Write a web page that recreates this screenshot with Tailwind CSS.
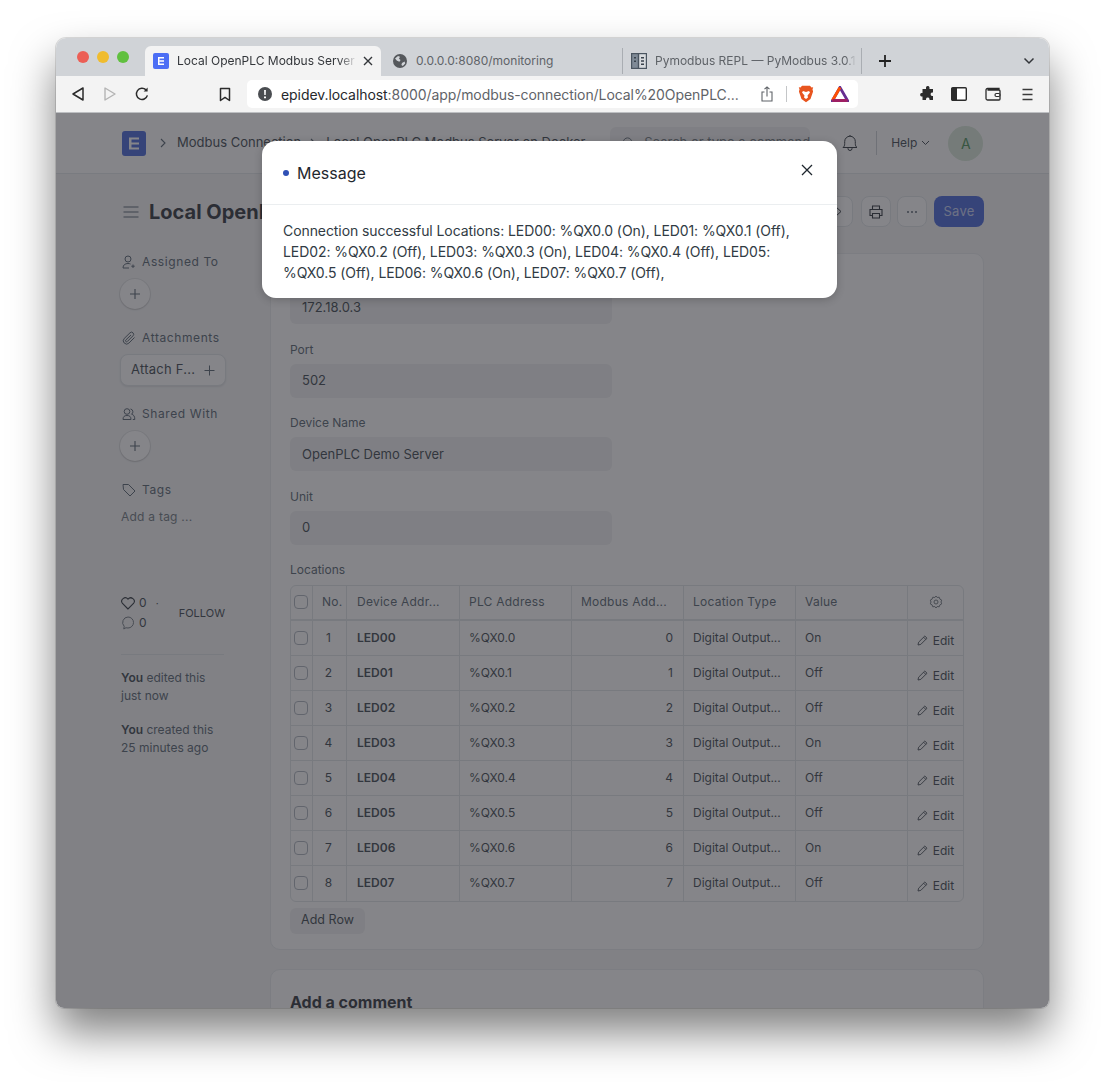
<!DOCTYPE html>
<html lang="en">
<head>
    <meta charset="UTF-8">
    <meta name="viewport" content="width=device-width, initial-scale=1.0">
    <title>Modbus Connection</title>
    <script src="https://cdn.jsdelivr.net/npm/@tailwindcss/browser@4"></script>
</head>
<body class="bg-white w-[1105px] h-[1082px] overflow-hidden font-['Inter',sans-serif] text-[#1f272e]">
<div class="relative ml-[56px] mt-[38px] w-[993px] h-[970px] rounded-t-[10px] rounded-b-[8px] overflow-hidden flex flex-col float-left">

    <!-- Tab strip -->
    <div class="h-[38px] shrink-0 bg-[#d0d3d7] flex items-end text-[12px] relative">
        <div class="w-[89px] h-[38px] pl-[21px] pt-[13px] flex gap-2">
            <span class="w-3 h-3 rounded-full bg-[#ec5f56]"></span>
            <span class="w-3 h-3 rounded-full bg-[#f0bc2e]"></span>
            <span class="w-3 h-3 rounded-full bg-[#60c03f]"></span>
        </div>
        <!-- active tab -->
        <div class="w-[236px] h-[30px] bg-[#f3f3f3] rounded-t-[6px] flex items-center pl-2 text-[#33363a]">
            <svg width="16" height="16" viewBox="0 0 16 16" class="shrink-0"><rect width="16" height="16" rx="2" fill="#4c6ef5"/><path d="M5 4h6v1.400H5zM6.600 7.300H11v1.400H6.600zM5 10.600h6V12H5zM5 4h1.500v8H5z" fill="#fff"/></svg>
            <span class="ml-2 w-[180px] whitespace-nowrap [mask-image:linear-gradient(to_right,black_90%,transparent_100%)]">Local OpenPLC Modbus Server</span>
            <svg width="10" height="10" viewBox="0 0 10 10" class="ml-[6px]"><path d="M1 1l8 8M9 1l-8 8" stroke="#33363a" stroke-width="1.400"/></svg>
        </div>
        <!-- monitoring tab -->
        <div class="w-[241px] h-[30px] flex items-center pl-[12px] text-[#5f6368]">
            <svg width="14" height="14" viewBox="0 0 14 14" class="shrink-0"><circle cx="7" cy="7" r="7" fill="#55585c"/><path d="M2 4.500l3-2.600 2 .8-1 2 1.600 1.400-1.200 1.600-2.400-1zM9 9l2.600-1.400.6 2-2.400 2.400-1.400-1z" fill="#d0d3d7"/></svg>
            <span class="ml-[9px] whitespace-nowrap">0.0.0.0:8080/monitoring</span>
        </div>
        <!-- pymodbus tab -->
        <div class="w-[240px] h-[26px] mb-[2px] flex items-center pl-2 border-x border-[#a9adb2] text-[#5f6368]">
            <svg width="16" height="16" viewBox="0 0 16 16" class="shrink-0"><rect width="16" height="16" fill="#4a5560"/><rect x="1.200" y="1.200" width="5.600" height="13.600" fill="#7f8a96"/><rect x="8.200" y="1.200" width="6.600" height="13.600" fill="#d8dbde"/><path d="M3 4h2v1.600H3zM3 7.500h2v1.600H3zM10 4h3v1.400h-3zM10 7.300h3v1.400h-3zM10 10.600h3V12h-3z" fill="#39424c"/></svg>
            <span class="ml-2 whitespace-nowrap [mask-image:linear-gradient(to_right,black_95%,transparent_100%)]">Pymodbus REPL — PyModbus 3.0.1</span>
        </div>
        <svg width="14" height="14" viewBox="0 0 14 14" class="ml-[16px] mb-[8px]"><path d="M7 1v12M1 7h12" stroke="#222" stroke-width="1.800"/></svg>
        <svg width="12" height="8" viewBox="0 0 12 8" class="ml-[131px] mb-[11px]"><path d="M1.500 1.500L6 6l4.500-4.500" fill="none" stroke="#33363a" stroke-width="1.500"/></svg>
    </div>

    <!-- Toolbar -->
    <div class="h-[37px] shrink-0 bg-[#f3f3f3] flex items-center border-b border-[#bdbfc2] relative">
        <svg width="14" height="16" viewBox="0 0 14 16" class="ml-[15px]"><path d="M12 2v12L2 8z" fill="none" stroke="#2b2b2b" stroke-width="1.500" stroke-linejoin="round"/></svg>
        <svg width="14" height="16" viewBox="0 0 14 16" class="ml-[18px]"><path d="M2 2v12l10-6z" fill="none" stroke="#b4b4b4" stroke-width="1.400" stroke-linejoin="round"/></svg>
        <svg width="16" height="16" viewBox="0 0 16 16" class="ml-[17px]"><path d="M13.400 9.400A5.600 5.600 0 1 1 12 3.900" fill="none" stroke="#2b2b2b" stroke-width="1.500"/><path d="M13.600 1.400v4h-4z" fill="#2b2b2b"/></svg>
        <svg width="12" height="15" viewBox="0 0 12 15" class="ml-[69px]"><path d="M1.500 1.500h9v12L6 10.400l-4.500 3.100z" fill="none" stroke="#2b2b2b" stroke-width="1.500" stroke-linejoin="round"/></svg>
        <!-- address bar -->
        <div class="ml-[16px] w-[611px] h-[28px] bg-white rounded-[5px] flex items-center pl-[11px] text-[14px] tracking-[-0.005em] text-[#5f6368]">
            <svg width="14" height="14" viewBox="0 0 14 14" class="shrink-0"><circle cx="7" cy="7" r="7" fill="#4a4d51"/><path d="M6.100 3h1.800l-.2 5H6.300z M6 9.400h2v1.800H6z" fill="#fff"/></svg>
            <span class="ml-[9px] w-[462px] whitespace-nowrap"><span class="text-[#26282b]">epidev.localhost</span>:8000/app/modbus-connection/Local%20OpenPLC...</span>
            <svg width="12" height="16" viewBox="0 0 12 16" class="ml-[18px]"><path d="M3.500 6H1v9h10V6H8.500M6 10.500V1M3.500 3.200L6 1l2.500 2.200" fill="none" stroke="#5f6368" stroke-width="1.100"/></svg>
            <span class="ml-[13px] w-px h-4 bg-[#c4c6c8]"></span>
            <svg width="16" height="18" viewBox="0 0 16 18" class="ml-[11px]"><path d="M4 .8h8l1.500 1.700 1.700-.3-.7 2.200.6 2.100-2.600 7.500L8 17.300 3.500 14 .9 6.500l.6-2.100-.7-2.200 1.700.3z" fill="#e8551f"/><path d="M5 6l3 1 3-1 1 1.500-2.500 3 .5 2-2 1.500-2-1.500.5-2L4 7.500z" fill="#fff"/></svg>
            <svg width="18" height="16" viewBox="0 0 18 16" class="ml-[17px]"><path d="M9 1.500L1.500 14.500h15z" fill="none" stroke="#662d91" stroke-width="2.800"/><path d="M9 1.500L1.500 14.500" stroke="#ff5000" stroke-width="2.800"/><path d="M1.500 14.500h15" stroke="#9e1f63" stroke-width="2.800"/></svg>
        </div>
        <svg width="16" height="16" viewBox="0 0 16 16" class="ml-[62px]"><path d="M6 1.500a1.800 1.800 0 0 1 3.500 0V3H13v3.500h-1a1.800 1.800 0 0 0 0 3.500h1V14H9.500v-1a1.800 1.800 0 0 0-3.500 0v1H2.500v-3.500H1.500a1.800 1.800 0 0 1 0-3.500h1V3H6z" fill="#2b2b2b"/></svg>
        <svg width="16" height="14" viewBox="0 0 16 14" class="ml-[15px]"><rect x=".7" y=".7" width="14.600" height="12.600" rx="1" fill="#fff" stroke="#2b2b2b" stroke-width="1.400"/><rect x="1" y="1" width="5" height="12" fill="#2b2b2b"/></svg>
        <svg width="16" height="14" viewBox="0 0 16 14" class="ml-[18px]"><path d="M14 3V1.500H2.500A1.500 1.500 0 0 0 1 3v8.500A1.500 1.500 0 0 0 2.500 13H14a1 1 0 0 0 1-1V4a1 1 0 0 0-1-1H2.500" fill="none" stroke="#2b2b2b" stroke-width="1.300"/><rect x="10" y="6.500" width="5" height="3" rx="1.500" fill="#fff" stroke="#2b2b2b" stroke-width="1.200"/></svg>
        <svg width="11" height="13" viewBox="0 0 11 13" class="ml-[21px]"><path d="M.5 1.500h10M.5 6.500h10M.5 11.500h10" stroke="#3a3a3a" stroke-width="1.400"/></svg>
    </div>

    <!-- Page under the dialog -->
    <div class="flex-1 bg-[#f4f5f6] overflow-hidden">
        <div class="h-[61px] bg-white border-b border-[#e2e6e9] flex items-center pl-[66px] text-[13px] text-[#313b44]">
            <svg width="24" height="25" viewBox="0 0 24 25" class="shrink-0"><rect width="24" height="25" rx="3" fill="#3a5cd8"/><path d="M7 6.500h10v2H7zM9.500 11.500H17v2H9.500zM7 16.500h10v2H7zM7 6.500h2.500v12H7z" fill="#fff"/></svg>
            <svg width="6" height="10" viewBox="0 0 6 10" class="ml-[14px]"><path d="M1 1l4 4-4 4" fill="none" stroke="#4c5a67" stroke-width="1.100"/></svg>
            <span class="ml-[11px] whitespace-nowrap">Modbus Connection</span>
            <svg width="6" height="10" viewBox="0 0 6 10" class="ml-[9px]"><path d="M1 1l4 4-4 4" fill="none" stroke="#4c5a67" stroke-width="1.100"/></svg>
            <span class="ml-[10px] w-[270px] whitespace-nowrap">Local OpenPLC Modbus Server on Docker</span>
            <div class="ml-[14px] w-[200px] h-[32px] -mt-px bg-[#f0f1f2] rounded-[6px] flex items-center pl-[12px] text-[#687178]">
                <svg width="14" height="14" viewBox="0 0 14 14"><circle cx="6" cy="6" r="4.500" fill="none" stroke="#4c5a67"/><path d="M9.500 9.500L13 13" stroke="#4c5a67"/></svg>
                <span class="ml-[9px] whitespace-nowrap">Search or type a command</span>
            </div>
            <svg width="18" height="18" viewBox="0 0 18 18" class="ml-[31px]"><path d="M2 13.500c1.200-1 1.700-2 1.700-4V7.500a5.300 5.300 0 0 1 10.600 0v2c0 2 .5 3 1.700 4zM7 13.500v1a2 2 0 0 0 4 0v-1M9 2.200V1" fill="none" stroke="#1f272e" stroke-width="1"/></svg>
            <span class="ml-[17px] w-px h-6 bg-[#c8cdd1]"></span>
            <span class="ml-[14px] text-[12px]">Help</span>
            <svg width="9" height="6" viewBox="0 0 9 6" class="ml-[4px]"><path d="M1 1l3.500 3.500L8 1" fill="none" stroke="#313b44"/></svg>
            <div class="ml-[18px] w-[35px] h-[35px] rounded-full bg-[#d6e7d6] text-[#3f8a4f] text-[14px] flex items-center justify-center">A</div>
        </div>

        <!-- Title row -->
        <div class="flex items-center h-[31px] mt-[22px] pl-[67px] pr-[65px]">
            <svg width="16" height="12" viewBox="0 0 16 12" class="shrink-0"><path d="M.5 1h15M.5 6h15M.5 11h15" stroke="#4c5a67" stroke-width="1.100"/></svg>
            <h1 class="ml-[10px] text-[20px] font-bold whitespace-nowrap w-[674px]">Local OpenPLC Modbus Server on Docker</h1>
            <div class="w-[30px] h-[31px] bg-white rounded-[8px] border border-[#dfe3e6] flex items-center justify-center">
                <svg width="7" height="11" viewBox="0 0 7 11"><path d="M1 1l5 4.500L1 10" fill="none" stroke="#1f272e"/></svg>
            </div>
            <div class="ml-2 w-[30px] h-[31px] bg-white rounded-[8px] border border-[#dfe3e6] flex items-center justify-center">
                <svg width="14" height="14" viewBox="0 0 14 14"><path d="M3.500 4.500V1h7v3.500M3.500 10.500H1V4.500h12v6h-2.500M3.500 8.500h7V13h-7z" fill="none" stroke="#1f272e" stroke-width="1.100"/></svg>
            </div>
            <div class="ml-[6px] w-[30px] h-[31px] bg-white rounded-[8px] border border-[#dfe3e6] flex items-center justify-center gap-[2px]">
                <span class="w-[2px] h-[2px] rounded-full bg-[#4c5a67]"></span><span class="w-[2px] h-[2px] rounded-full bg-[#4c5a67]"></span><span class="w-[2px] h-[2px] rounded-full bg-[#4c5a67]"></span>
            </div>
            <button class="ml-[7px] w-[50px] h-[31px] rounded-[8px] bg-[#3a5cd8] text-white/70 text-[13px] tracking-[0.02em]">Save</button>
        </div>

        <div class="flex mt-[26px] pl-[65px]">
            <!-- Sidebar -->
            <div class="w-[149px] shrink-0 text-[12px] text-[#4c5a67] tracking-[0.02em]">
                <div class="mt-px h-4 flex items-center gap-[6px] tracking-[0.05em] pl-px">
                    <svg width="14" height="14" viewBox="0 0 14 14"><circle cx="6" cy="4" r="3" fill="none" stroke="#4c5a67"/><path d="M1 13c0-3 2-4.500 5-4.500 1 0 2 .2 2.500.5M1 13h6M11 9.500v3.500M9.300 11.200h3.400" fill="none" stroke="#4c5a67"/></svg>
                    Assigned To
                </div>
                <div class="mt-[9px] w-[30px] h-[30px] ml-[-1px] rounded-full bg-white shadow-[0_0_0_1px_rgba(0,0,0,0.08),0_1px_2px_rgba(0,0,0,0.15)] flex items-center justify-center">
                    <svg width="12" height="12" viewBox="0 0 12 12"><path d="M6 1v10M1 6h10" stroke="#4c5a67" stroke-width="1.100"/></svg>
                </div>
                <div class="mt-[21px] h-4 flex items-center gap-[6px] tracking-[0.05em] pl-px">
                    <svg width="14" height="14" viewBox="0 0 14 14"><path d="M12.500 6.500L7 12a3.200 3.200 0 0 1-4.800-4.500L8 1.800a2.100 2.100 0 0 1 3 3L5.300 10.500a1 1 0 0 1-1.500-1.500L9 4" fill="none" stroke="#4c5a67"/></svg>
                    Attachments
                </div>
                <div class="mt-2 ml-[-1px] w-[106px] h-[32px] rounded-[8px] bg-white border border-[#dfe3e6] shadow-[0_1px_2px_rgba(0,0,0,0.1)] flex items-center pl-[10px] text-[13px] text-[#313b44]">
                    Attach F...
                    <svg width="11" height="11" viewBox="0 0 11 11" class="ml-[9px]"><path d="M5.500.5v10M.5 5.500h10" stroke="#4c5a67"/></svg>
                </div>
                <div class="mt-[20px] h-4 flex items-center gap-[6px] tracking-[0.05em] pl-px">
                    <svg width="14" height="14" viewBox="0 0 14 14"><circle cx="5" cy="4.500" r="2.800" fill="none" stroke="#4c5a67"/><path d="M1 12.500c0-3 1.500-4 4-4s4 1 4 4zM8.500 2a2.800 2.800 0 0 1 1 5.200c2 .4 3.300 1.800 3.300 5.300h-2" fill="none" stroke="#4c5a67"/></svg>
                    Shared With
                </div>
                <div class="mt-[9px] w-[30px] h-[30px] ml-[-1px] rounded-full bg-white shadow-[0_0_0_1px_rgba(0,0,0,0.08),0_1px_2px_rgba(0,0,0,0.15)] flex items-center justify-center">
                    <svg width="12" height="12" viewBox="0 0 12 12"><path d="M6 1v10M1 6h10" stroke="#4c5a67" stroke-width="1.100"/></svg>
                </div>
                <div class="mt-[21px] h-4 flex items-center gap-[6px] tracking-[0.05em] pl-px">
                    <svg width="14" height="14" viewBox="0 0 14 14"><path d="M1 1.500h5.500l6.500 6.500-5 5-6.500-6.500zM3.800 4.200h.1" fill="none" stroke="#4c5a67" stroke-linejoin="round"/></svg>
                    Tags
                </div>
                <div class="mt-[11px] h-4 leading-4 text-[#687178]">Add a tag ...</div>

                <div class="mt-[70px] w-[104px] flex items-center justify-between text-[#313b44]">
                    <div>
                        <div class="h-4 flex items-center gap-[4px]">
                            <svg width="14" height="13" viewBox="0 0 14 13"><path d="M7 12L1.500 6.500a3.300 3.300 0 0 1 5.500-4.300 3.300 3.300 0 0 1 5.500 4.300z" fill="none" stroke="#1f272e" stroke-width="1.100"/></svg>
                            0 <span class="ml-[5px] text-[10px]">·</span>
                        </div>
                        <div class="mt-[4px] h-4 flex items-center gap-[4px]">
                            <svg width="14" height="14" viewBox="0 0 14 14"><path d="M7 1a5.500 5.500 0 0 1 0 11c-.8 0-1.400-.1-2-.3L2.800 13l.4-2.700A5.500 5.500 0 0 1 7 1z" fill="none" stroke="#687178"/></svg>
                            0
                        </div>
                    </div>
                    <span class="text-[11px] tracking-normal">FOLLOW</span>
                </div>
                <div class="mt-[23px] w-[103px] h-px bg-[#dfe3e6]"></div>
                <div class="mt-[14px] w-[100px] leading-[18px] tracking-normal"><b class="font-semibold text-[#313b44]">You</b> edited this just now</div>
                <div class="mt-[16px] w-[100px] leading-[18px] tracking-normal"><b class="font-semibold text-[#313b44]">You</b> created this 25 minutes ago</div>
            </div>

            <!-- Form -->
            <div class="w-[714px] shrink-0">
                <div class="bg-white rounded-[10px] border border-[#e8ebed] px-[19px] pt-[14px] pb-[15px] text-[13px]">
                    <div class="w-[322px] mb-[17.500px]">
                        <div class="h-4 leading-4 text-[12px] text-[#4c5a67] mb-[6px]">IP Address</div>
                        <div class="h-[34px] bg-[#f0f1f2] rounded-[6px] flex items-center px-3 pt-px text-[#313b44]">172.18.0.3</div>
                    </div>
                    <div class="w-[322px] mb-[17.500px]">
                        <div class="h-4 leading-4 text-[12px] text-[#4c5a67] mb-[6px]">Port</div>
                        <div class="h-[34px] bg-[#f0f1f2] rounded-[6px] flex items-center px-3 text-[#313b44]">502</div>
                    </div>
                    <div class="w-[322px] mb-[17.500px]">
                        <div class="h-4 leading-4 text-[12px] text-[#4c5a67] mb-[6px]">Device Name</div>
                        <div class="h-[34px] bg-[#f0f1f2] rounded-[6px] flex items-center px-3 pt-px text-[#313b44]">OpenPLC Demo Server</div>
                    </div>
                    <div class="w-[322px] mb-[17.500px]">
                        <div class="h-4 leading-4 text-[12px] text-[#4c5a67] mb-[6px]">Unit</div>
                        <div class="h-[34px] bg-[#f0f1f2] rounded-[6px] flex items-center px-3 text-[#313b44]">0</div>
                    </div>
                    <div class="h-4 leading-4 text-[12px] text-[#4c5a67] mb-[6.500px]">Locations</div>

                    <div class="w-[674px] rounded-[6px] border border-[#dfe3e6] text-[12px]">
                        <div class="grid grid-cols-[21px_34px_113px_112px_112px_112px_112px_56px] h-[35px] border-b-2 border-[#dfe3e6] text-[#4c5a67] tracking-[0.02em] items-stretch">
                            <div class="flex items-center justify-center pr-px"><span class="w-[14px] h-[14px] rounded-[4px] border border-[#a8b0b8] bg-white"></span></div>
                            <div class="border-l border-[#dfe3e6] flex items-center pl-[9px]">No.</div>
                            <div class="border-l border-[#dfe3e6] flex items-center pl-[10px]">Device Addr...</div>
                            <div class="border-l border-[#dfe3e6] flex items-center pl-[9px]">PLC Address</div>
                            <div class="border-l border-[#dfe3e6] flex items-center pl-[9px]">Modbus Add...</div>
                            <div class="border-l border-[#dfe3e6] flex items-center pl-[9px]">Location Type</div>
                            <div class="border-l border-[#dfe3e6] flex items-center pl-[9px]">Value</div>
                            <div class="border-l border-[#dfe3e6] flex items-center justify-center">
                                <svg width="14" height="14" viewBox="0 0 14 14"><circle cx="7" cy="7" r="2" fill="none" stroke="#687178"/><path d="M7 1l1.200 1.500 2-.3.700 1.900 1.800 1-.7 1.900.7 1.900-1.800 1-.7 1.900-2-.3L7 13l-1.200-1.500-2 .3-.7-1.900-1.800-1L2 7 1.300 5.100l1.800-1 .7-1.900 2 .3z" fill="none" stroke="#687178"/></svg>
                            </div>
                        </div>
                        <div id="rows"></div>
                    </div>
                    <button class="mt-[6px] w-[75px] h-[26px] rounded-[6px] bg-[#f0f1f2] text-[12.500px] text-[#313b44]">Add Row</button>
                </div>

                <div class="mt-[19px] bg-white rounded-[10px] border border-[#e8ebed] px-[19px] pt-[20px] h-[80px]">
                    <h2 class="text-[16px] font-bold">Add a comment</h2>
                </div>
            </div>
        </div>
    </div>

    <!-- Backdrop -->
    <div class="absolute left-0 right-0 top-[75px] bottom-0 bg-[#33343a]/[0.6]"></div>

    <!-- Dialog -->
    <div class="absolute left-[206px] top-[103px] w-[575px] h-[157px] bg-white rounded-[14px] shadow-[0_2px_8px_rgba(0,0,0,0.2)]">
        <div class="h-[64px] border-b border-[#ebeef0] flex items-center pl-[21px] pr-[24px]">
            <span class="w-[6px] h-[6px] rounded-full bg-[#2f50b5]"></span>
            <span class="ml-2 text-[16px] text-[#1f272e]">Message</span>
            <svg width="12" height="12" viewBox="0 0 12 12" class="ml-auto -mt-[5px]"><path d="M1 1l10 10M11 1L1 11" stroke="#1f272e" stroke-width="1.300"/></svg>
        </div>
        <p class="px-[21px] pt-[15px] text-[14px] leading-[21px] tracking-[-0.08px] text-[#313b44]">Connection successful Locations: LED00: %QX0.0 (On), LED01: %QX0.1 (Off), LED02: %QX0.2 (Off), LED03: %QX0.3 (On), LED04: %QX0.4 (Off), LED05: %QX0.5 (Off), LED06: %QX0.6 (On), LED07: %QX0.7 (Off),</p>
    </div>
</div>
<!-- window shadow sits on a sibling so the rounded clip does not cut it -->
<div class="absolute left-[56px] top-[38px] w-[993px] h-[970px] rounded-t-[10px] rounded-b-[8px] -z-10 shadow-[0_0_0_1px_rgba(0,0,0,0.12),0_24px_44px_rgba(0,0,0,0.5)]"></div>

<script>
    const locations = ['On', 'Off', 'Off', 'On', 'Off', 'Off', 'On', 'Off'];
    document.getElementById('rows').innerHTML = locations.map((value, i) => `
        <div class="grid grid-cols-[21px_34px_113px_112px_112px_112px_112px_56px] h-[35px] ${i < 7 ? 'border-b' : ''} border-[#dfe3e6] text-[#313b44] items-stretch">
            <div class="flex items-center justify-center pr-px"><span class="w-[14px] h-[14px] rounded-[4px] border border-[#a8b0b8] bg-white"></span></div>
            <div class="border-l border-[#dfe3e6] flex items-center justify-center pr-[2px]">${i + 1}</div>
            <div class="border-l border-[#dfe3e6] flex items-center pl-[10px] font-semibold">LED0${i}</div>
            <div class="border-l border-[#dfe3e6] flex items-center pl-[9px]">%QX0.${i}</div>
            <div class="border-l border-[#dfe3e6] flex items-center justify-end pr-[10px]">${i}</div>
            <div class="border-l border-[#dfe3e6] flex items-center pl-[9px]">Digital Output...</div>
            <div class="border-l border-[#dfe3e6] flex items-center pl-[9px]">${value}</div>
            <div class="border-l border-[#dfe3e6] flex items-center justify-center gap-[5px] pt-[6px]">
                <svg width="11" height="11" viewBox="0 0 11 11"><path d="M1 10l.6-2.800L7.800 1l2.200 2.200-6.200 6.200zM6.600 2.200l2.200 2.200" fill="none" stroke="#313b44" stroke-width=".9"/></svg>Edit
            </div>
        </div>`).join('');
</script>
</body>
</html>
